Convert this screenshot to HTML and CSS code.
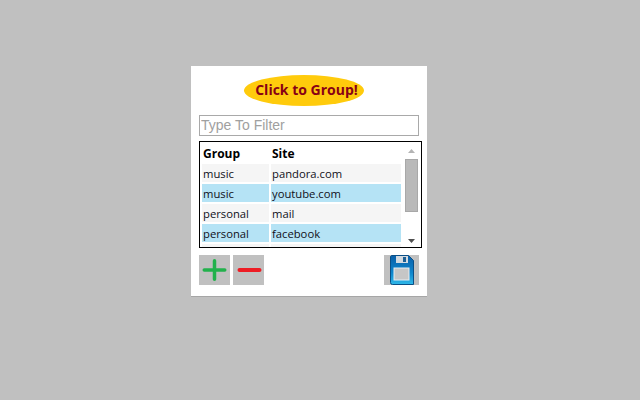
FILE: index.html
```html
<!DOCTYPE html>
<html lang="en">
<head>
    <meta charset="UTF-8">
    <title>Click to Group</title>
    <link rel="stylesheet" href="styles.css">
</head>
<body>
    <div class="panel">
        <button class="group-btn">Click to Group!</button>
        <input class="filter" type="text" placeholder="Type To Filter">
        <div class="list">
            <div class="rows">
                <div class="row head"><span>Group</span><span>Site</span></div>
                <div class="row"><span>music</span><span>pandora.com</span></div>
                <div class="row blue"><span>music</span><span>youtube.com</span></div>
                <div class="row"><span>personal</span><span>mail</span></div>
                <div class="row blue"><span>personal</span><span>facebook</span></div>
                <div class="row"><span></span><span></span></div>
            </div>
            <div class="scrollbar">
                <svg class="arrow" width="9" height="6" viewBox="0 0 9 6"><path d="M4.500 1 L8 5 L1 5 Z" fill="#b4b4b4"/></svg>
                <div class="thumb"></div>
                <svg class="arrow arrow-down" width="9" height="6" viewBox="0 0 9 6"><path d="M1 1 L8 1 L4.500 5 Z" fill="#505050"/></svg>
            </div>
        </div>
        <div class="tools">
            <button class="tool">
                <svg width="26" height="26" viewBox="0 0 26 26"><path d="M12.500 3.750 V22.250 M2.250 13 H22.750" stroke="#22b14c" stroke-width="3.500" stroke-linecap="round"/></svg>
            </button>
            <button class="tool">
                <svg width="26" height="26" viewBox="0 0 26 26"><path d="M3.500 13 H23.500" stroke="#ed1c24" stroke-width="4" stroke-linecap="round"/></svg>
            </button>
            <button class="tool save">
                <svg width="24" height="30" viewBox="0 0 24 30">
                    <defs>
                        <linearGradient id="disk" x1="0" y1="0" x2="0" y2="1">
                            <stop offset="0" stop-color="#0a5fa8"/>
                            <stop offset="0.6" stop-color="#0f86cc"/>
                            <stop offset="1" stop-color="#2fb8e8"/>
                        </linearGradient>
                    </defs>
                    <path d="M1.500 0.500 H18.500 L23.500 5.500 V29.500 H2.500 Q0.500 29.500 0.500 27.500 V1.500 Z" fill="url(#disk)" stroke="#0a4f86" stroke-width="1"/>
                    <rect x="6" y="1" width="12" height="7" fill="#d4dae0"/>
                    <rect x="13" y="2" width="3" height="5" fill="#1c5f94"/>
                    <rect x="4" y="13" width="15" height="12" fill="#c6c6c6" stroke="#e6eef4" stroke-width="1"/>
                </svg>
            </button>
        </div>
    </div>
</body>
</html>
```

FILE: styles.css
```css
body {
    margin: 0;
    height: 400px;
    overflow: hidden;
    background-color: #c0c0c0;
    font-family: "Open Sans", "Noto Sans", sans-serif;
}
.panel {
    box-sizing: border-box;
    width: 236px;
    height: 230px;
    margin: 66px 0 0 191px;
    padding: 9px 8px 0 8px;
    background-color: white;
    box-shadow: 0 1px 0 #a6a6a6;
}
.group-btn {
    display: block;
    width: 120px;
    height: 31px;
    margin-left: 45px;
    padding: 0 0 2px 5px;
    border: none;
    border-radius: 50%;
    background-color: #ffcb0c;
    color: #880015;
    font-family: "Open Sans", sans-serif;
    font-size: 14px;
    font-weight: 700;
}
.filter {
    display: block;
    box-sizing: border-box;
    width: 220px;
    height: 21px;
    margin-top: 9px;
    padding: 0 1px 2px 1px;
    border: 1px solid #a9a9a9;
    border-radius: 0;
    outline: none;
    font-family: "Liberation Sans", Arial, sans-serif;
    font-size: 14px;
}
.filter::placeholder {
    color: #a0a0a0;
    opacity: 1;
}
.list {
    display: flex;
    box-sizing: border-box;
    width: 223px;
    height: 107px;
    margin-top: 5px;
    padding: 2px 2px 0 2px;
    border: 1px solid black;
    overflow: hidden;
}
.rows {
    flex: 1;
    display: flex;
    flex-direction: column;
    gap: 2px;
}
.row {
    flex: none;
    display: grid;
    grid-template-columns: 67px 130px;
    column-gap: 2px;
    height: 18px;
    font-size: 11.25px;
    color: #101020;
}
.head {
    font-size: 12px;
    font-weight: 700;
    color: black;
}
.row span {
    box-sizing: border-box;
    height: 18px;
    padding: 1px 0 0 1px;
    line-height: 18px;
    background-color: #f5f5f5;
}
.head span {
    background-color: white;
}
.blue span {
    background-color: #b5e3f5;
}
.scrollbar {
    flex: none;
    display: flex;
    flex-direction: column;
    align-items: center;
    width: 18px;
    height: 101px;
    margin-left: 1px;
}
.arrow {
    flex: none;
    margin-top: 4px;
}
.arrow-down {
    margin-top: auto;
    margin-bottom: 1px;
}
.thumb {
    box-sizing: border-box;
    width: 13px;
    height: 53px;
    margin-top: 5px;
    background-color: #b9b9b9;
    border: 1px solid #a8a8a8;
}
.tools {
    display: flex;
    gap: 3px;
    margin-top: 7px;
}
.tool {
    display: flex;
    align-items: center;
    justify-content: center;
    width: 31px;
    height: 30px;
    padding: 0;
    border: none;
    background-color: #c0c0c0;
}
.save {
    width: 35px;
    margin-left: auto;
}
```
